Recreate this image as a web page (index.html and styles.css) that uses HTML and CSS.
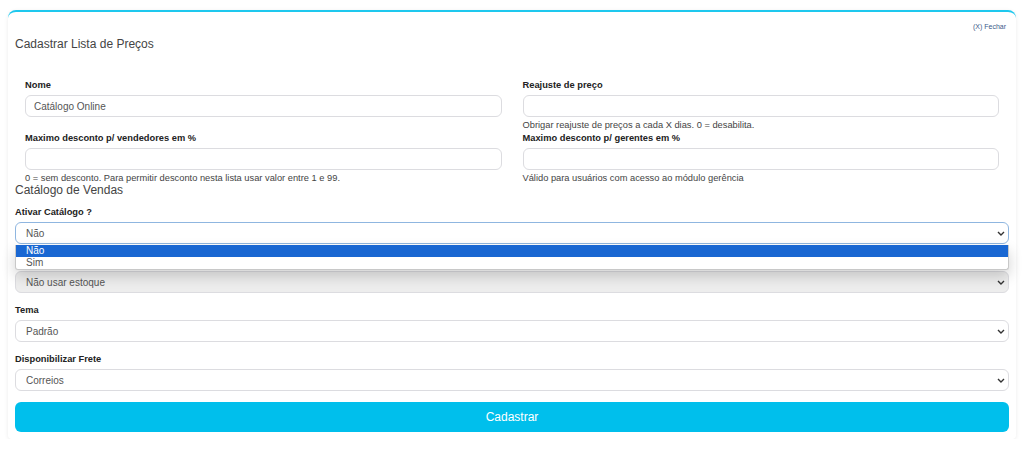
FILE: index.html
```html
<!DOCTYPE html>
<html lang="pt-BR">
<head>
  <meta charset="UTF-8">
  <meta name="viewport" content="width=device-width, initial-scale=1.0">
  <title>Cadastrar Lista de Preços</title>
  <link rel="stylesheet" href="styles.css">
</head>
<body>
  <div class="card">
    <div class="close-row"><a href="#" class="close">(X) Fechar</a></div>
    <h2 class="title">Cadastrar Lista de Preços</h2>

    <div class="grid">
      <div class="field">
        <label>Nome</label>
        <input type="text" value="Catálogo Online">
      </div>
      <div class="field">
        <label>Reajuste de preço</label>
        <input type="text">
        <p class="help">Obrigar reajuste de preços a cada X dias. 0 = desabilita.</p>
      </div>
      <div class="field">
        <label>Maximo desconto p/ vendedores em %</label>
        <input type="text">
        <p class="help">0 = sem desconto. Para permitir desconto nesta lista usar valor entre 1 e 99.</p>
      </div>
      <div class="field">
        <label>Maximo desconto p/ gerentes em %</label>
        <input type="text">
        <p class="help">Válido para usuários com acesso ao módulo gerência</p>
      </div>
    </div>

    <h3 class="section">Catálogo de Vendas</h3>

    <div class="group first">
      <label>Ativar Catálogo ?</label>
      <div class="select-wrap">
        <select class="focused">
          <option>Não</option>
          <option>Sim</option>
        </select>
        <svg class="arrow" viewBox="0 0 8 5"><path d="M1 1l3 3 3-3" /></svg>
        <!-- open dropdown list -->
        <ul class="dropdown">
          <li class="selected">Não</li>
          <li>Sim</li>
        </ul>
      </div>
    </div>

    <div class="group">
      <label class="covered">Controle de Estoque</label>
      <div class="select-wrap">
        <select class="shaded">
          <option>Não usar estoque</option>
        </select>
        <svg class="arrow" viewBox="0 0 8 5"><path d="M1 1l3 3 3-3" /></svg>
      </div>
    </div>

    <div class="group">
      <label>Tema</label>
      <div class="select-wrap">
        <select>
          <option>Padrão</option>
        </select>
        <svg class="arrow" viewBox="0 0 8 5"><path d="M1 1l3 3 3-3" /></svg>
      </div>
    </div>

    <div class="group">
      <label>Disponibilizar Frete</label>
      <div class="select-wrap">
        <select>
          <option>Correios</option>
        </select>
        <svg class="arrow" viewBox="0 0 8 5"><path d="M1 1l3 3 3-3" /></svg>
      </div>
    </div>

    <button class="submit">Cadastrar</button>
  </div>
</body>
</html>
```

FILE: styles.css
```css
body {
  font-family: "Liberation Sans", Arial, sans-serif;
  margin: 0;
  padding: 10px 8px 0;
  background-color: #fff;
  color: #333;
}
.card {
  border-top: 2px solid #1ec8ee;
  border-radius: 8px 8px 4px 4px;
  box-shadow: 0 1px 4px rgba(0, 0, 0, 0.08);
  padding: 0 7px 7px;
  background-color: #fff;
}
.close-row {
  text-align: right;
  height: 12px;
  padding-top: 9px;
  padding-right: 3px;
  font-size: 7px;
  line-height: 12px;
}
.close {
  color: #3b5a8a;
  text-decoration: none;
}
.title {
  margin: 3px 0 0;
  font-size: 12px;
  font-weight: normal;
  line-height: 16px;
  color: #444;
}
.grid {
  display: grid;
  grid-template-columns: 1fr 1fr;
  column-gap: 21px;
  padding: 0 10px;
  margin-top: 27px;
}
.field {
  height: 53px;
}
label {
  display: block;
  font-size: 9.3px;
  font-weight: bold;
  line-height: 12px;
  color: #222;
  margin-bottom: 4px;
}
label.covered {
  visibility: hidden;
}
input, select {
  display: block;
  width: 100%;
  box-sizing: border-box;
  height: 22px;
  border: 1px solid #dcdce0;
  border-radius: 6px;
  background-color: #fff;
  font-family: "Liberation Sans", Arial, sans-serif;
  font-size: 10px;
  color: #555;
  padding: 0 8px;
  margin: 0;
}
select {
  appearance: none;
  -webkit-appearance: none;
  padding-left: 10px;
}
.help {
  margin: 2px 0 0;
  font-size: 9.3px;
  line-height: 12px;
  color: #444;
}
.section {
  margin: -2px 0 0;
  font-size: 12px;
  font-weight: normal;
  line-height: 15px;
  color: #444;
}
.group {
  margin-top: 11px;
}
.group.first {
  margin-top: 8px;
}
.select-wrap {
  position: relative;
}
.arrow {
  position: absolute;
  right: 4px;
  top: 9px;
  width: 8px;
  height: 5px;
  fill: none;
  stroke: #333;
  stroke-width: 1.4;
}
select.focused {
  border-color: #8fb6e0;
}
select.shaded {
  background-color: #ededed;
}
.dropdown {
  position: absolute;
  left: 0;
  right: 0;
  top: 23px;
  margin: 0;
  padding: 0;
  list-style: none;
  background-color: #fff;
  border: 1px solid #c8c8c8;
  border-top: none;
  border-radius: 0 0 3px 3px;
  box-shadow: 0 6px 14px rgba(0, 0, 0, 0.18);
  z-index: 2;
}
.dropdown li {
  font-size: 10px;
  line-height: 12px;
  height: 12px;
  padding-left: 10px;
  color: #555;
}
.dropdown li.selected {
  background-color: #1967d2;
  color: #fff;
}
.submit {
  display: block;
  width: 100%;
  height: 30px;
  margin-top: 11px;
  border: none;
  border-radius: 6px;
  background-color: #00bfec;
  color: #fff;
  font-family: "Liberation Sans", Arial, sans-serif;
  font-size: 12px;
}
```
